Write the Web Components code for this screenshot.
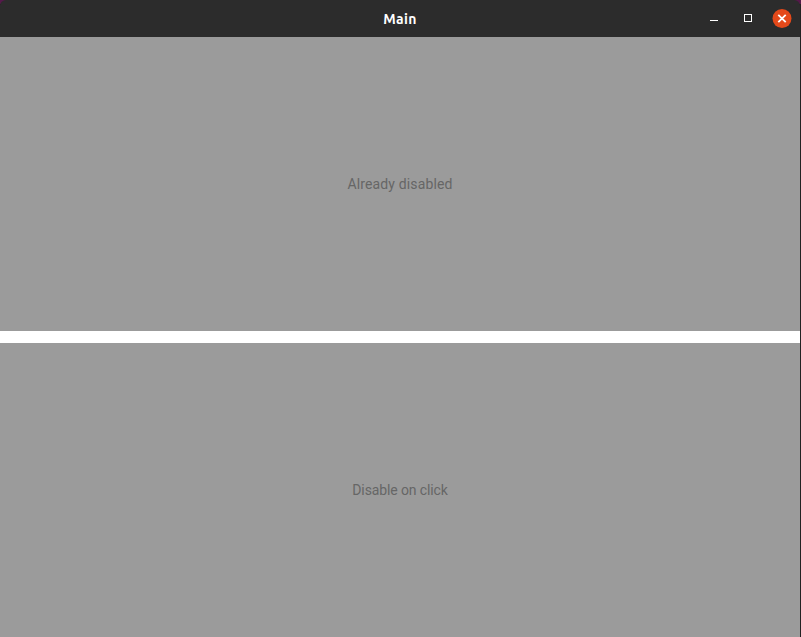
<!DOCTYPE html>
<html>
<head>
<meta charset="utf-8">
<title>Main</title>
<style>
 html, body { margin: 0; height: 100%; overflow: hidden; }
 /* wallpaper shows through the rounded window corners */
 body { background: linear-gradient(#55194a 0 4px, #222 4px); }
</style>
</head>
<body>
<app-window heading="Main">
 <disabled-button style="letter-spacing: .14px">Already disabled</disabled-button>
 <disabled-button style="letter-spacing: -.12px">Disable on click</disabled-button>
</app-window>

<script>
class TitleBar extends HTMLElement {
 constructor() {
  super();
  this.attachShadow({ mode: 'open' });
 }

 connectedCallback() {
  this.shadowRoot.innerHTML = `
  <style>
   :host {
    display: flex;
    align-items: center;
    justify-content: flex-end;
    position: relative;
    height: 37px;
    flex: none;
    background: #2c2c2c;
    border-radius: 6px 6px 0 0;
    font-family: Ubuntu, 'Noto Sans', sans-serif;
   }
   .title {
    position: absolute;
    left: 0;
    right: 0;
    text-align: center;
    color: #fff;
    font-size: 14px;
    font-weight: 700;
    letter-spacing: .4px;
   }
   .controls {
    display: flex;
    align-items: center;
    gap: 14px;
    padding: 1px 8px 0 0;
   }
   .controls span {
    display: flex;
    align-items: center;
    justify-content: center;
    width: 20px;
    height: 20px;
   }
   svg { display: block; }
  </style>
  <div class="title">${this.getAttribute('heading') || ''}</div>
  <div class="controls">
   <span><svg width="10" height="10" viewBox="0 0 10 10"><path d="M1 6.5h8" stroke="#fff" fill="none"/></svg></span>
   <span><svg width="10" height="10" viewBox="0 0 10 10"><rect x="1.5" y=".5" width="7" height="7" stroke="#fff" fill="none"/></svg></span>
   <span><svg width="20" height="20" viewBox="0 0 20 20"><circle cx="10" cy="9.5" r="9.5" fill="#e4491a"/><path d="M6.3 5.8l7.4 7.4M13.7 5.8l-7.4 7.4" stroke="#fff" stroke-width="1.8" fill="none"/></svg></span>
  </div>
  `;
 }
}

class DisabledButton extends HTMLElement {
 constructor() {
  super();
  this.attachShadow({ mode: 'open' });
  this.shadowRoot.innerHTML = `
  <style>
   :host {
    display: flex;
    flex: 1;
    align-items: center;
    justify-content: center;
    background: #9b9b9b;
    color: #666;
    font-family: Roboto, sans-serif;
    font-size: 14px;
   }
  </style>
  <slot></slot>
  `;
 }
}

class AppWindow extends HTMLElement {
 constructor() {
  super();
  this.attachShadow({ mode: 'open' });
 }

 connectedCallback() {
  this.shadowRoot.innerHTML = `
  <style>
   :host {
    display: flex;
    flex-direction: column;
    width: 800px;
    height: 637px;
   }
   .content {
    flex: 1;
    display: flex;
    flex-direction: column;
    gap: 12px;
    background: #fff;
   }
   ::slotted(*) { flex: 1; }
  </style>
  <title-bar heading="${this.getAttribute('heading') || ''}"></title-bar>
  <div class="content"><slot></slot></div>
  `;
 }
}

customElements.define('title-bar', TitleBar);
customElements.define('disabled-button', DisabledButton);
customElements.define('app-window', AppWindow);
</script>
</body>
</html>
